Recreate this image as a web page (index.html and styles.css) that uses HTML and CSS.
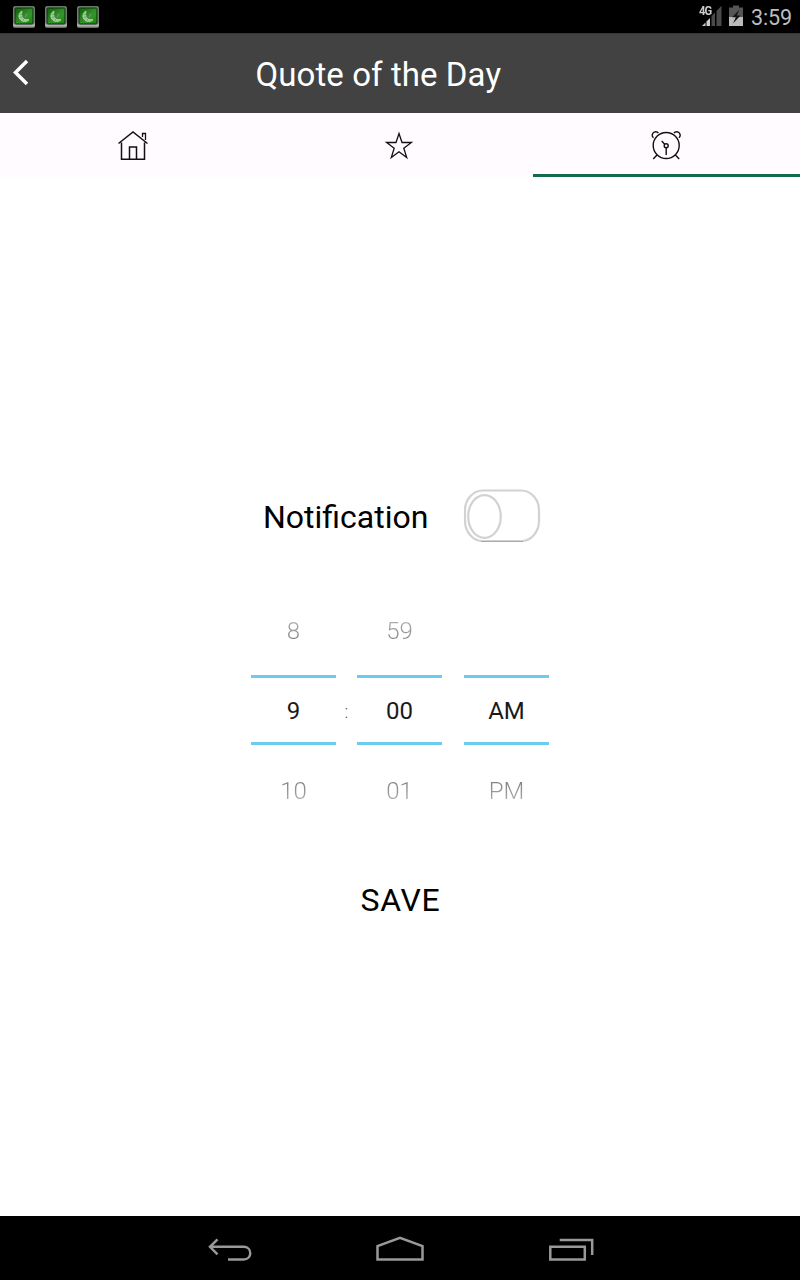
FILE: index.html
```html
<!DOCTYPE html>
<html lang="en">
<head>
<meta charset="utf-8">
<title>Quote of the Day</title>
<link rel="stylesheet" href="styles.css">
</head>
<body>
<svg class="defs" width="0" height="0">
  <defs>
    <linearGradient id="rim" x1="0" y1="0" x2="0" y2="1"><stop offset="0" stop-color="#70756e"/><stop offset=".75" stop-color="#808080"/><stop offset=".9" stop-color="#b5b5b5"/><stop offset="1" stop-color="#555"/></linearGradient>
    <linearGradient id="face" x1="0" y1="0" x2="1" y2="1"><stop offset="0" stop-color="#0f5f0c"/><stop offset=".6" stop-color="#34962a"/><stop offset="1" stop-color="#18800e"/></linearGradient>
    <symbol id="app" viewBox="0 0 22 22">
      <rect x="0" y="0" width="22" height="22" rx="2" fill="url(#rim)"/>
      <rect x="2" y="2" width="18" height="16" rx="1" fill="url(#face)" stroke="#083808" stroke-width="1"/>
      <path d="M9 5.200C5.800 6.500 5 10.500 7 13.200C9.200 16 13.500 16.200 16 13.800C12.500 14.200 9.500 12.800 8.800 10C8.400 8 8.600 6.500 9 5.200Z" fill="#a0c69a" stroke="#b0cfab" stroke-width="1"/>
      <path d="M7 8.500H10M7 11.500L10.500 10.500M10 14.500L11.500 12" stroke="#4c8f46" stroke-width=".6"/>
      <path d="M12 11L14 7.500" stroke="#6daa5c" stroke-width="1"/>
    </symbol>
  </defs>
</svg>
<div class="screen">
  <div class="status">
    <div class="status-left">
      <svg width="22" height="22"><use href="#app"/></svg>
      <svg width="22" height="22"><use href="#app"/></svg>
      <svg width="22" height="22"><use href="#app"/></svg>
    </div>
    <div class="status-right">
      <div class="signal">
        <svg width="24" height="22" viewBox="0 0 24 22">
          <path d="M3 21L6.500 17.500V21Z" fill="#ccc"/><path d="M7.500 21V16.500L11 13V21Z" fill="#ccc"/>
          <path d="M12.500 21V11L16 7.500V21ZM17.500 21V6L22.500 .8V21Z" fill="#4a4a4a"/>
        </svg>
        <span class="network">4G</span>
      </div>
      <svg class="battery" width="14" height="22" viewBox="0 0 14 22">
        <path d="M4 .5H10V2.500H14V12H0V2.500H4Z" fill="#555"/>
        <path d="M0 12H14V21H0Z" fill="#bbb"/>
        <path d="M10.500 4.500L3.200 12.200H6.800L4 18.500L11.500 10.500H7.800Z" fill="#151515"/>
      </svg>
      <span class="clock">3:59</span>
    </div>
  </div>
  <header class="header">
    <svg class="back" width="20" height="30" viewBox="0 0 20 30"><path d="M16 4L4.500 15.500L16 27" fill="none" stroke="#fff" stroke-width="3.500"/></svg>
    <h1 class="title">Quote of the Day</h1>
  </header>
  <nav class="tabs">
    <div class="tab">
      <svg width="32" height="32" viewBox="0 0 32 32" fill="none" stroke="#111" stroke-width="1.500"><path d="M1.500 14.500L16 3L30.500 14.500M4.500 13.500V30.300H27.500V13.500M12.500 30V18H19.500V30"/><path d="M25.500 8V4.500H28.500V11" stroke-width="1.300"/></svg>
    </div>
    <div class="tab">
      <svg width="32" height="32" viewBox="0 0 32 32" fill="none" stroke="#111" stroke-width="1.300"><path d="M15 4.500L18 13.500H27.400L19.800 19.200L22.700 28.500L15 22.700L7.300 28.500L10.200 19.200L2.600 13.500H12Z"/></svg>
    </div>
    <div class="tab tab-active">
      <svg width="32" height="32" viewBox="0 0 32 32" fill="none" stroke="#111" stroke-width="1.400"><g transform="translate(-.8 0)"><circle cx="16" cy="16.500" r="13"/><circle cx="16" cy="16.700" r="2"/><path d="M16 18.700V26M14.500 15.200L11.500 12M7 25.700L3 30M25 25.700L29 30"/><path d="M3.300 8.800C1 7 2 3 5.200 2.700C6.500 2.600 7.500 3 8.200 4M28.700 8.800C31 7 30 3 26.800 2.700C25.500 2.600 24.500 3 23.800 4"/></g></svg>
    </div>
  </nav>
  <main class="content">
    <div class="notify">
      <span class="notify-label">Notification</span>
      <svg class="toggle" width="78" height="54" viewBox="0 0 78 54" fill="none">
        <rect x="2" y="1.500" width="74" height="50.500" rx="18" ry="20" stroke="#d3d1d1" stroke-width="2.200"/>
        <path d="M18 52.500H60" stroke="#aaa" stroke-width="1"/>
        <ellipse cx="21.500" cy="27.500" rx="16.300" ry="21.300" stroke="#d3d0d0" stroke-width="2.200"/>
      </svg>
    </div>
    <div class="picker">
      <div class="wheel"><span class="prev">8</span><span class="current">9</span><span class="next">10</span></div>
      <span class="colon">:</span>
      <div class="wheel"><span class="prev">59</span><span class="current">00</span><span class="next">01</span></div>
      <span class="gap"></span>
      <div class="wheel"><span class="prev"></span><span class="current">AM</span><span class="next">PM</span></div>
    </div>
    <div class="save">SAVE</div>
  </main>
  <footer class="navbar">
    <svg width="46" height="30" viewBox="0 0 46 30" fill="none" stroke="#999" stroke-width="2.500"><path d="M10.500 4.300L3 11.800L10.500 19.300M3 11.800H36.500C45.500 11.800 45.500 24.500 36.500 24.500H21"/></svg>
    <svg width="50" height="30" viewBox="0 0 50 30" fill="none" stroke="#999" stroke-width="2.500"><path d="M2.500 24.500V11L25 2.800L47.500 11V24.500Z"/></svg>
    <svg width="48" height="30" viewBox="0 0 48 30" fill="none" stroke="#999" stroke-width="2.500"><path d="M3.300 11.700H37.800V24.500H3.300ZM12.700 5H45.200V20"/></svg>
  </footer>
</div>
</body>
</html>
```
FILE: styles.css
```css
body { margin: 0; font-family: Roboto, sans-serif; color: #000; background: #fff; }
svg { display: block; flex: none; }
.defs { position: absolute; }
.screen { width: 800px; height: 1280px; display: flex; flex-direction: column; overflow: hidden; }
.status { height: 33px; flex: none; background: #000; display: flex; justify-content: space-between; }
.status-left { display: flex; gap: 10px; padding: 6px 0 0 13px; }
.status-right { display: flex; align-items: flex-start; padding: 5px 8px 0 0; }
.signal { position: relative; }
.network { position: absolute; left: 0; top: 0; font-size: 12.500px; line-height: 12px; font-weight: 700; color: #ccc; letter-spacing: -1px; transform: scaleX(.9); transform-origin: left; }
.battery { margin-left: 6px; }
.clock { margin-left: 8px; font-size: 21.500px; line-height: 26px; color: #bebebe; letter-spacing: -.1px; }
.header { height: 80px; flex: none; box-sizing: border-box; background: #424242; border-top: 1px solid #3a3632; display: flex; }
.back { margin: 23px 0 0 10.500px; }
.title { margin: 0 0 0 225px; font-size: 33px; line-height: 82px; font-weight: 370; color: #fff; white-space: nowrap; letter-spacing: .08px; }
.tabs { height: 64px; flex: none; background: #fffbff; display: grid; grid-template-columns: 266px 267px 267px; }
.tab { box-sizing: border-box; display: flex; justify-content: center; padding-top: 16px; border-bottom: 3px solid transparent; }
.tab-active { border-bottom-color: #146c4f; }
.content { flex: 1; display: flex; flex-direction: column; align-items: center; padding-top: 311px; }
.notify { width: 278px; padding-left: 4px; display: flex; align-items: center; justify-content: space-between; }
.notify-label { font-size: 32px; font-weight: 370; line-height: 56px; padding-top: 1px; margin-bottom: -1px; white-space: nowrap; }
.picker { margin-top: 47px; width: 298px; height: 240px; display: grid; grid-template-columns: 85px 21px 85px 22px 85px; align-items: center; font-size: 24px; }
.wheel { height: 240px; display: flex; flex-direction: column; align-items: center; }
.prev, .next { color: transparent; background-clip: text; -webkit-background-clip: text; font-weight: 360; }
.prev { height: 84px; line-height: 80px; background-image: linear-gradient(#fff 0%, #acacac 36%, #808080 62%); }
.next { height: 85px; line-height: 92px; background-image: linear-gradient(#808080 42%, #acacac 66%, #fff 100%); }
.current { width: 85px; height: 70px; box-sizing: border-box; border-top: 3px solid #6cccee; border-bottom: 3px solid #6cccee; text-align: center; line-height: 66px; font-weight: 390; color: #1a1a1a; }
.colon { text-align: center; font-size: 18px; font-weight: 350; color: #555; }
.save { margin-top: 49px; padding-left: 1px; font-size: 32px; font-weight: 370; line-height: 40px; letter-spacing: .7px; }
.navbar { height: 64px; flex: none; background: #000; display: flex; padding: 19px 0 0 207px; box-sizing: border-box; gap: 122px; }
```
